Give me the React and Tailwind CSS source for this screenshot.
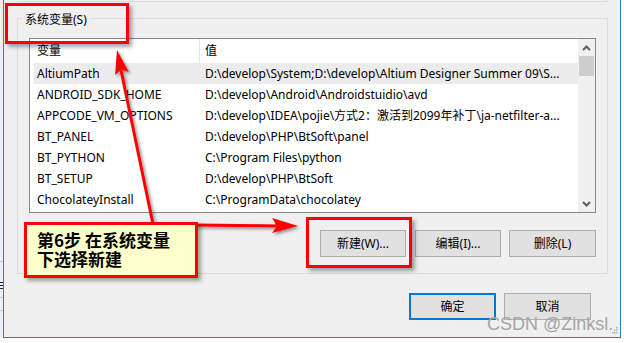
import React from "react";

const rows = [
  ["AltiumPath", "D:\\develop\\System;D:\\develop\\Altium Designer Summer 09\\S...", true],
  ["ANDROID_SDK_HOME", "D:\\develop\\Android\\Androidstuidio\\avd"],
  ["APPCODE_VM_OPTIONS", "D:\\develop\\IDEA\\pojie\\方式2：激活到2099年补丁\\ja-netfilter-a..."],
  ["BT_PANEL", "D:\\develop\\PHP\\BtSoft\\panel"],
  ["BT_PYTHON", "C:\\Program Files\\python"],
  ["BT_SETUP", "D:\\develop\\PHP\\BtSoft"],
  ["ChocolateyInstall", "C:\\ProgramData\\chocolatey"],
];

function Chevron({ up }) {
  return (
    <svg width="9" height="6" viewBox="0 0 9 6">
      <polyline
        points={up ? "1,5 4.5,1.5 8,5" : "1,1 4.5,4.5 8,1"}
        fill="none"
        stroke="#606060"
        strokeWidth="2"
      />
    </svg>
  );
}

function Btn({ children, className = "" }) {
  return (
    <div
      className={`h-[27px] bg-[#e1e1e1] border border-[#adadad] flex items-center justify-center text-[12px] text-black ${className}`}
    >
      {children}
    </div>
  );
}

export default function App() {
  return (
    <div
      className="w-[624px] h-[343px] bg-white flex relative overflow-hidden"
      style={{ fontFamily: '"Noto Sans", "Noto Sans CJK SC", sans-serif' }}
    >
      {/* left strip of background window */}
      <div className="w-[3px] h-[337px] bg-[#f0f0f0] flex flex-col">
        <div className="h-[261px]" />
        <div className="h-[1px] bg-[#c8c8c8]" />
        <div className="h-[20px]" />
        <div className="h-[1px] bg-[#222]" />
        <div className="h-[2px]" />
        <div className="h-[1px] bg-[#222]" />
        <div className="h-[2px]" />
        <div className="h-[1px] bg-[#222]" />
        <div className="h-[8px]" />
        <div className="h-[1px] bg-[#c8c8c8]" />
        <div className="h-[12px]" />
        <div className="h-[1px] bg-[#c8c8c8]" />
      </div>

      {/* window */}
      <div className="w-[618px] h-[338px] border-l border-r border-b border-[#2b7bd3] bg-[#f0f0f0] flex flex-col">
        {/* previous group box bottom */}
        <div className="ml-[13px] w-[591px] h-[2px] border-b border-r border-[#dcdcdc]" />

        <fieldset className="ml-[13px] mt-[6px] w-[591px] border border-[#dcdcdc] p-0 m-0">
          <legend className="ml-[4px] px-[3px] pt-[4px] text-[12px] leading-[16px] text-black">
            系统变量(S)
          </legend>
          <div className="pl-[11px] pr-[11px] pb-[16px] flex flex-col">
            {/* list view */}
            <div className="mt-[10px] w-[567px] h-[175px] border border-[#828790] bg-white flex">
              <div className="flex-1 flex flex-col overflow-hidden">
                <div className="h-[24px] flex text-[12px] text-black">
                  <div className="w-[170px] pl-[7px] border-r border-[#e5e5e5] flex items-center">
                    变量
                  </div>
                  <div className="pl-[5px] flex items-center">值</div>
                </div>
                {rows.map(([k, v, sel]) => (
                  <div
                    key={k}
                    className={`h-[21px] ml-[4px] flex items-center text-[12px] text-black whitespace-nowrap ${
                      sel ? "bg-[#ececec]" : ""
                    }`}
                  >
                    <div className="w-[165px] pl-[3px] overflow-hidden">{k}</div>
                    <div className="pl-[6px] overflow-hidden">{v}</div>
                  </div>
                ))}
              </div>
              {/* scrollbar */}
              <div className="w-[17px] bg-[#f0f0f0] flex flex-col">
                <div className="h-[17px] flex items-center justify-center">
                  <Chevron up />
                </div>
                <div className="h-[20px] mx-[1px] bg-[#cdcdcd]" />
                <div className="flex-1" />
                <div className="h-[17px] flex items-center justify-center">
                  <Chevron />
                </div>
              </div>
            </div>

            {/* buttons */}
            <div className="mt-[17px] flex justify-end">
              <Btn className="w-[86px]">新建(W)...</Btn>
              <Btn className="w-[86px] ml-[9px]">编辑(I)...</Btn>
              <Btn className="w-[87px] ml-[8px]">删除(L)</Btn>
            </div>
          </div>
        </fieldset>

        <div className="mt-[19px] pr-[29px] flex justify-end">
          <div className="w-[87px] h-[27px] bg-[#e1e1e1] border-2 border-[#0078d7] flex items-center justify-center text-[12px] text-black">
            确定
          </div>
          <Btn className="w-[87px] ml-[8px]">取消</Btn>
        </div>
      </div>

      {/* annotation: red box around label */}
      <div className="absolute left-[5px] top-[3px] w-[124px] h-[41px] border-[3px] border-[#ff0000] shadow-[3px_3px_4px_rgba(0,0,0,0.35)]" />
      {/* annotation: red box around new button */}
      <div className="absolute left-[306px] top-[217px] w-[106px] h-[51px] border-[3px] border-[#ff0000] shadow-[3px_3px_4px_rgba(0,0,0,0.35)]" />

      {/* arrows */}
      <svg className="absolute left-0 top-0 pointer-events-none" width="624" height="343">
        <defs>
          <filter id="sh" x="-20%" y="-20%" width="140%" height="140%">
            <feDropShadow dx="2" dy="2" stdDeviation="1.5" floodColor="#000" floodOpacity="0.4" />
          </filter>
        </defs>
        <g filter="url(#sh)" fill="#ff0000" stroke="none">
          <line x1="153" y1="224" x2="121" y2="70" stroke="#ff0000" strokeWidth="3" />
          <polygon points="117,50 128.8,72.1 121.5,69.5 115.1,74.9" />
          <line x1="195" y1="225" x2="280" y2="226" stroke="#ff0000" strokeWidth="3" />
          <polygon points="298,226 272,218 277,226 272,233" />
        </g>
      </svg>

      {/* callout */}
      <div className="absolute left-[24px] top-[222px] w-[174px] h-[56px] border-[3px] border-[#ff0000] bg-[#ffffcc] shadow-[3px_3px_4px_rgba(0,0,0,0.35)] pl-[10px] pt-[5px]">
        <div
          className="text-[17px] leading-[19px] font-bold text-black"
          style={{ fontFamily: '"Noto Sans CJK SC", sans-serif' }}
        >
          第6步 在系统变量
          <br />
          下选择新建
        </div>
      </div>

      {/* watermark */}
      <div
        className="absolute left-[487px] top-[315px] text-[18px] leading-[18px] text-[#a5a5a5] whitespace-nowrap"
        style={{ fontFamily: '"Liberation Sans", sans-serif' }}
      >
        CSDN @Zinksl.
      </div>
      <svg className="absolute left-[611px] top-[326px]" width="8" height="8">
        <rect x="5" y="1" width="1.5" height="1.5" fill="#b0b0b0" />
        <rect x="3" y="3.5" width="1.5" height="1.5" fill="#b0b0b0" />
        <rect x="5" y="3.5" width="1.5" height="1.5" fill="#b0b0b0" />
        <rect x="1" y="6" width="1.5" height="1.5" fill="#b0b0b0" />
        <rect x="3" y="6" width="1.5" height="1.5" fill="#b0b0b0" />
        <rect x="5" y="6" width="1.5" height="1.5" fill="#b0b0b0" />
      </svg>
    </div>
  );
}
